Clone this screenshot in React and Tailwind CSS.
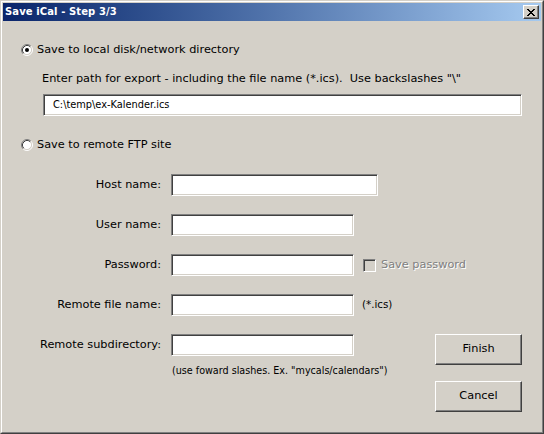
import React from 'react';

const FONT = { fontFamily: '"DejaVu Sans", Verdana, sans-serif' };

const Radio = ({ checked }) => (
    <svg width="12" height="12" viewBox="0 0 12 12" className="shrink-0">
        <circle cx="6" cy="6" r="4.5" fill="#ffffff" />
        <path d="M2.11 9.89 A5.5 5.5 0 0 1 9.89 2.11" stroke="#808080" strokeWidth="1" fill="none" />
        <path d="M9.89 2.11 A5.5 5.5 0 0 1 2.11 9.89" stroke="#ffffff" strokeWidth="1" fill="none" />
        <path d="M2.82 9.18 A4.5 4.5 0 0 1 9.18 2.82" stroke="#404040" strokeWidth="1" fill="none" />
        <path d="M9.18 2.82 A4.5 4.5 0 0 1 2.82 9.18" stroke="#d4d0c8" strokeWidth="1" fill="none" />
        {checked && <circle cx="6" cy="6" r="2" fill="#000000" />}
    </svg>
);

const CloseGlyph = () => {
    const rows = ['11000011', '01100110', '00111100', '00011000', '00111100', '01100110', '11000011'];
    return (
        <svg width="8" height="7" viewBox="0 0 8 7" shapeRendering="crispEdges">
            {rows.map((r, y) =>
                r.split('').map((c, x) => (c === '1' ? <rect key={`${x}-${y}`} x={x} y={y} width="1" height="1" fill="#000" /> : null))
            )}
        </svg>
    );
};

// sunken edit box
const Field = ({ width, value }) => (
    <div
        className="shrink-0 h-[22px] bg-white border border-t-[#808080] border-l-[#808080] border-b-white border-r-white shadow-[inset_1px_1px_0_#404040,inset_-1px_-1px_0_#d4d0c8] flex items-center pl-[9px] text-[9.8px] text-black"
        style={{ width }}
    >
        {value}
    </div>
);

const Button = ({ children }) => (
    <div className="w-[87px] h-[31px] flex items-center justify-center border border-t-white border-l-white border-b-[#404040] border-r-[#404040] shadow-[inset_-1px_-1px_0_#808080] text-[11.3px] text-black">
        {children}
    </div>
);

const Label = ({ children }) => (
    <div className="h-[22px] flex items-center justify-end">{children}</div>
);

export default function App() {
    return (
        <div style={FONT} className="w-[544px] h-[434px] bg-[#d4d0c8] border border-t-[#d4d0c8] border-l-[#d4d0c8] border-b-[#404040] border-r-[#404040]">
            <div className="w-full h-full border border-t-white border-l-white border-b-[#808080] border-r-[#808080] p-px flex flex-col">
                {/* Title bar */}
                <div className="h-[18px] bg-gradient-to-r from-[#0a246a] to-[#a6caf0] flex items-center pl-[2px] pr-[2px]">
                    <span className="text-white font-bold text-[10px] leading-none tracking-[0.1px]">Save iCal - Step 3/3</span>
                    <div className="ml-auto w-[16px] h-[14px] bg-[#d4d0c8] border border-t-white border-l-white border-b-[#404040] border-r-[#404040] shadow-[inset_-1px_-1px_0_#808080] flex items-center justify-center">
                        <CloseGlyph />
                    </div>
                </div>

                {/* Body */}
                <div className="flex-1 flex flex-col text-[11.3px] text-black whitespace-nowrap">
                    <div className="mt-[22px] ml-[18px] h-[14px] flex items-center gap-[4px]">
                        <Radio checked />
                        <span>Save to local disk/network directory</span>
                    </div>

                    <div className="mt-[15px] ml-[39px] h-[14px] flex items-center whitespace-pre">
                        {'Enter path for export - including the file name (*.ics).  Use backslashes "\\"'}
                    </div>

                    <div className="mt-[8px] ml-[40px]">
                        <Field width={479} value="C:\temp\ex-Kalender.ics" />
                    </div>

                    <div className="mt-[22px] ml-[18px] h-[14px] flex items-center gap-[4px]">
                        <Radio />
                        <span>Save to remote FTP site</span>
                    </div>

                    <div className="mt-[22px] flex items-start">
                        {/* FTP form */}
                        <div className="shrink-0 grid grid-cols-[158px_207px] gap-x-[10px] gap-y-[18px] items-start content-start">
                            <Label>Host name:</Label>
                            <Field width={207} />

                            <Label>User name:</Label>
                            <Field width={183} />

                            <Label>Password:</Label>
                            <div className="flex items-center">
                                <Field width={183} />
                                <div className="shrink-0 ml-[9px] w-[13px] h-[13px] bg-[#d4d0c8] border border-t-[#808080] border-l-[#808080] border-b-white border-r-white shadow-[inset_1px_1px_0_#404040,inset_-1px_-1px_0_#d4d0c8]" />
                                <span className="ml-[5px] text-[#808080] [text-shadow:1px_1px_0_#ffffff]">Save password</span>
                            </div>

                            <Label>Remote file name:</Label>
                            <div className="flex items-center">
                                <Field width={183} />
                                <span className="ml-[8px] text-[10.3px]">(*.ics)</span>
                            </div>

                            <Label>Remote subdirectory:</Label>
                            <div className="flex flex-col">
                                <Field width={183} />
                                <div className="mt-[9px] ml-[1px] h-[13px] flex items-center text-[9.6px]">(use foward slashes. Ex. "mycals/calendars")</div>
                            </div>
                        </div>

                        {/* Buttons */}
                        <div className="ml-auto mr-[19px] mt-[160px] flex flex-col gap-[16px]">
                            <Button>Finish</Button>
                            <Button>Cancel</Button>
                        </div>
                    </div>
                </div>
            </div>
        </div>
    );
}
